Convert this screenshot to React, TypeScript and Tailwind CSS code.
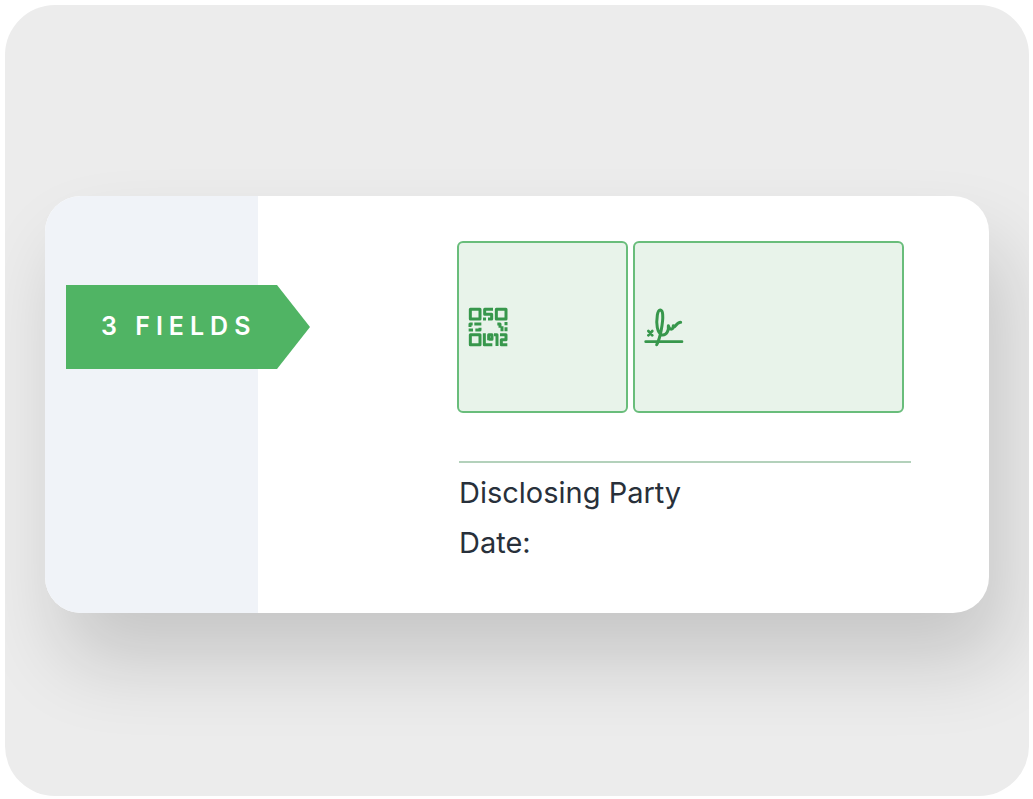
function QrCodeIcon() {
  return (
    <svg
      viewBox="24 24 120 120"
      className="size-10"
      fill="none"
      stroke="currentColor"
      strokeWidth="9"
      strokeLinejoin="round"
      aria-hidden="true"
    >
      {/* Finder squares */}
      <rect x="31" y="31" width="29" height="29" />
      <rect x="109" y="31" width="29" height="29" />
      <rect x="31" y="107" width="29" height="30" />
      {/* Data modules */}
      <path d="M99 31H74V46H95V60H84M69 60H78" />
      <path d="M30 84V75H38M43 75H64M26 93H39M46 93H60V86" />
      <path d="M112 75H120V86M126 82V97M138 69V79M138 85V97" />
      <path d="M73 103V137H97M86 124V107H96V121H86" />
      <path d="M102 107H111V141M120 107H138V122H124V137H142" />
    </svg>
  )
}

function SignatureIcon() {
  return (
    <svg
      viewBox="24 20 120 120"
      className="size-10"
      fill="none"
      stroke="currentColor"
      strokeWidth="9"
      strokeLinecap="round"
      strokeLinejoin="round"
      aria-hidden="true"
    >
      <path d="M37 92L49 105M49 92L37 105" strokeWidth="8" />
      <path d="M29 124H138" strokeWidth="8" />
      <path d="M62 133C72 116 82 66 80 42C79 24 67 24 64 44C60 70 63 98 78 104C92 106 99 90 97 76C101 90 111 90 112 76C114 90 120 66 134 66" />
    </svg>
  )
}

const fieldClass =
  'flex h-43 min-w-0 items-center rounded-md border-2 border-[#69bd7b] bg-[#e8f3ea] pl-[9px] text-[#37974c]'

export default function App() {
  return (
    <main className="flex min-h-screen bg-white pt-[5px] pr-1 pb-[3px] pl-[5px] font-['Inter','Liberation_Sans',sans-serif]">
      <div className="flex flex-1 flex-col justify-center overflow-hidden rounded-[50px] bg-[#ececec] px-10 pt-2">
        <section className="flex rounded-[36px] bg-white shadow-[16px_48px_80px_rgba(0,0,0,0.16)]">
          {/* Page margin with the tag pointing at the fields */}
          <aside className="w-[213px] shrink-0 rounded-l-[36px] bg-[#f0f3f8] pt-[89px] pl-[21px]">
            <div className="flex h-21 w-61 items-center bg-[#50b464] pl-[35px] text-[25px] font-semibold tracking-[6px] whitespace-nowrap text-white [clip-path:polygon(0_0,211px_0,100%_50%,211px_100%,0_100%)]">
              3 FIELDS
            </div>
          </aside>

          <div className="min-w-0 flex-1 pt-[45px] pr-[78px] pb-[45px] pl-[199px]">
            <div className="mr-[7px] grid grid-cols-[171fr_271fr] gap-[5px]">
              <button type="button" aria-label="QR code" className={fieldClass}>
                <QrCodeIcon />
              </button>
              <button type="button" aria-label="Signature" className={fieldClass}>
                <SignatureIcon />
              </button>
            </div>

            <div className="mt-12 ml-0.5 border-t-2 border-[#b3d1bb] pt-[5px] text-[29px] leading-[50px] text-[#28303a]">
              <p>Disclosing Party</p>
              <p>Date:</p>
            </div>
          </div>
        </section>
      </div>
    </main>
  )
}
